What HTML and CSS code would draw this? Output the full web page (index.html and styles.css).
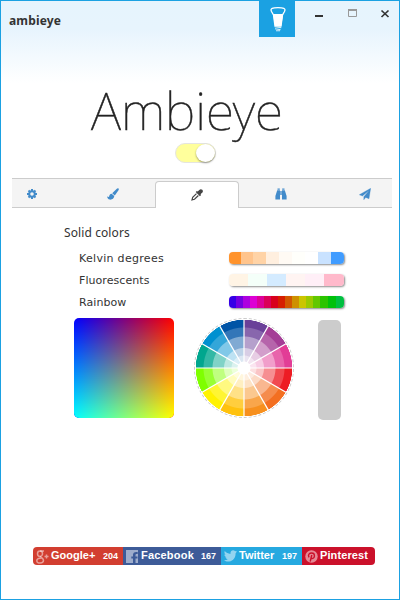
FILE: index.html
```html
<!DOCTYPE html>
<html lang="en">
<head>
<meta charset="utf-8">
<title>ambieye</title>
<link rel="stylesheet" href="styles.css">
</head>
<body>
<div class="window">
  <header class="titlebar">
    <span class="title">ambieye</span>
    <span class="bulb"><svg width="16" height="26" viewBox="0 0 16 26"><path d="M1.500 5.500C-.2 2 3 1.700 8 1.700s8.200.3 6.500 3.800L12.500 9 11 20H5L3.500 9z" fill="none" stroke="#fff" stroke-width="1.300"/><path d="M3 8h10.200l-2 12H5z" fill="#fff"/><path d="M4.800 20.800l6.500.8M5 22.800l5.500.8M6 24.700h4" stroke="#d2ecf9" stroke-width="1.100"/></svg></span>
    <svg class="controls" width="76" height="14" viewBox="0 0 76 14"><path d="M0 9h8" stroke="#333" stroke-width="2"/><path d="M33.500 3v6.500h8V3" fill="none" stroke="#999"/><path d="M33 3h9" stroke="#999" stroke-width="2"/><path d="M66.500 3.500l7 6.500M73.500 3.500l-7 6.500" stroke="#333" stroke-width="1.700"/></svg>
  </header>
  <div class="logo">
    <svg width="220" height="66"><text x="10" y="51" textLength="192" lengthAdjust="spacingAndGlyphs">Ambieye</text></svg>
  </div>
  <div class="switch"><span class="knob"></span></div>
  <nav class="tabs">
    <span class="tab t1"><svg width="10" height="10" viewBox="0 0 10 10"><circle cx="5" cy="5" r="2.800" fill="none" stroke="currentColor" stroke-width="2"/><path d="M5 0v2M5 8v2M0 5h2M8 5h2M1.500 1.500l1.300 1.300M7.200 7.200l1.300 1.300M1.500 8.500l1.300-1.300M7.200 2.800l1.300-1.300" stroke="currentColor" stroke-width="2"/></svg></span>
    <span class="tab t2"><svg width="12" height="12" viewBox="0 0 12 12"><path d="M11.300.3c.8.5.5 1.300.2 1.900L7.800 7.500 5.200 5.300 9.800.7c.5-.5 1.100-.7 1.500-.4zM4.600 5.800l2.700 2.300C7 10.800 4.800 12 2.600 11.600 1.200 11.300.3 10 .1 8.500l1.900.6C2.300 7.300 3 6 4.600 5.800z" fill="currentColor"/></svg></span>
    <span class="tab active"><svg width="12" height="12" viewBox="0 0 12 12"><path d="M11.300.8c1 1 .6 2.300-.2 3L9.500 5.300l.6.8-1.200 1.200-4.200-4.200 1.200-1.200.8.6L8.300.9c.8-.8 2-1 3-.1z" fill="currentColor"/><path d="M5.500 4.600L1.700 8.400 1 10.900l2.500-.6 3.900-3.800" fill="none" stroke="currentColor" stroke-width="1.200"/></svg></span>
    <span class="tab t4"><svg width="12" height="12" viewBox="0 0 12 12"><path d="M2.500.5h2.300v1.200H2.500zM7.200.5h2.300v1.200H7.200zM2.200 2.300H5v9.200H.4V8zM7 2.300h2.800L11.600 8v3.500H7zM5.300 3h1.400v4H5.300z" fill="currentColor"/></svg></span>
    <span class="tab t5"><svg width="12" height="12" viewBox="0 0 12 12"><path d="M11.700.2L10 10.800 6.700 9.400 4.800 11.800V8.700L10 2.400 3.500 8 .3 6.800z" fill="currentColor" stroke="currentColor" stroke-width=".3"/></svg></span>
  </nav>
  <main class="content">
    <h2>Solid colors</h2>
    <div class="row wide"><span>Kelvin degrees</span><i class="bar kelvin"></i></div>
    <div class="row"><span>Fluorescents</span><i class="bar fluo"></i></div>
    <div class="row"><span>Rainbow</span><i class="bar rainbow"></i></div>
    <div class="pickers">
      <div class="square"></div>
      <div class="wheel"><svg width="98" height="98" viewBox="-49 -49 98 98"><path d="M0-49V49M-49 0H49M-24.500-42.400l49 84.800M24.500-42.400l-49 84.800M-42.400-24.500l84.800 49M-42.400 24.500l84.800-49" stroke="#fff" stroke-width="1.200"/></svg></div>
      <div class="preview"></div>
    </div>
  </main>
  <footer class="share">
    <a class="google"><svg width="13" height="14" viewBox="0 0 13 14"><g fill="none" stroke="currentColor" stroke-width="1.500"><ellipse cx="4" cy="3.700" rx="2.500" ry="2.700"/><path d="M4 1h4M5 6.300c-1 1 2.500 2 2.500 4C7.500 13.800.8 14 .8 10.800.8 8.500 3.500 8 5.500 8M8.500 6.500h4M10.500 4.500v4"/></g></svg><b>Google+</b><em>204</em></a>
    <a class="facebook"><svg width="13" height="13" viewBox="0 0 13 13"><path d="M0 0h12v13H9.500V8.500h2V6.400h-2V5c0-1 .7-1.200 2.200-1V2C8.500 1.500 7 2.700 7 4.800v1.600H5.300v2.100H7V13H0z" fill="currentColor"/></svg><b>Facebook</b><em>167</em></a>
    <a class="twitter"><svg width="13" height="12" viewBox="0 0 13 12"><path d="M13 1.600l-1.400 1.600C11.700 9 7.500 11.500 4 11.500c-1.500 0-3-.4-4-1.200 1.500.1 2.800-.3 3.800-1.100-1.200-.1-2-.8-2.400-1.900h1.100C1.200 6.800.4 5.800.4 4.500l1.200.3C.4 3.800.1 2.400.8 1c1.500 1.800 3.400 2.700 5.700 2.900C6 1 8.800-.7 11 1z" fill="currentColor"/></svg><b>Twitter</b><em>197</em></a>
    <a class="pinterest"><svg width="13" height="13" viewBox="0 0 13 13"><circle cx="6.500" cy="6.500" r="6.200" fill="currentColor"/><path d="M4 7.300C2.500 4.500 4.500 3 6.700 3c3.800 0 3.300 5.500.6 5.500C6.500 8.500 6 8 6 7.500M6.800 5L5.200 11.500" fill="none" stroke="#cb112b" stroke-width="1.400"/></svg><b>Pinterest</b></a>
  </footer>
</div>
</body>
</html>
```
FILE: styles.css
```css
* { box-sizing: border-box; }
body { margin: 0; font-family: "DejaVu Sans", sans-serif; color: #333; }
.window {
  width: 400px; height: 600px; border: 1px solid #1ba1e2;
  background: linear-gradient(#e6f4fd 0, #e7f4fd 28px, #fff 82px);
  display: flex; flex-direction: column;
}
.titlebar { display: flex; height: 36px; flex: none; align-items: flex-start; }
.title { width: 250px; margin-left: 8px; font: bold 12px/17px "Noto Sans", sans-serif; letter-spacing: .15px; padding-top: 11px; }
.bulb { width: 36px; height: 36px; background: #1ba1e2; display: flex; justify-content: center; padding: 5px 0 0 1px; }
.controls { margin: 6px 0 0 20px; }
.logo { height: 66px; margin: 42px 0 0 80px; }
.logo svg { display: block; overflow: visible; }
.logo text { font: 100 52px "Noto Sans", sans-serif; fill: #222; stroke: #222; stroke-width: .5px; }
.switch {
  flex: none; width: 41px; height: 20px; margin: -2px 0 0 174px; border-radius: 10px;
  border: 1px solid #e5e5e0; background: #ffff9c; display: flex; justify-content: flex-end;
}
.knob { width: 19px; height: 18px; border-radius: 50%; background: #fff; box-shadow: 0 1px 2px rgba(0,0,0,.4); }
.tabs {
  flex: none; height: 30px; margin: 15px 7px 0 11px; display: grid;
  grid-template-columns: 59px 84px 84px 84px 69px;
  border-top: 1px solid #ccc; background: #f4f4f4; color: #428bca;
}
.tab { border-bottom: 1px solid #ccc; display: flex; align-items: center; justify-content: center; padding-top: 2px; }
.t1 { width: 144px; padding-right: 105px; }
.t1, .t2 { width: auto; }
.t1 { padding-right: 20px; }
.tab.active {
  margin: 2px 0 0; border: 1px solid #ccc; border-bottom: 0; border-radius: 4px 4px 0 0;
  background: #fff; color: #444; padding-top: 0;
}
.t5 { padding-left: 15px; }
.content { margin-left: 63px; padding-top: 16px; height: 339px; flex: none; }
h2 { margin: 0 0 6px; font: 12px/17px "Noto Sans", sans-serif; letter-spacing: .1px; }
.row { display: flex; align-items: center; height: 22px; padding-left: 15px; font-size: 11px; letter-spacing: .07px; }
.row.wide { letter-spacing: .3px; }
.row span { width: 150px; }
.bar { width: 115px; height: 12px; border-radius: 4px; box-shadow: 1px 1px 2px rgba(0,0,0,.45); }
.kelvin { background: linear-gradient(90deg, #ff932c 12px, #ffc48c 0 24px, #ffd3a6 0 37px, #ffefdf 0 50px, #fffaf4 0 63px, #fffffb 0 76px, #fff 0 89px, #c9e2ff 0 102px, #409cff 0); }
.fluo { background: linear-gradient(90deg, #fff4e5 19px, #f4fff9 0 38px, #d4ebff 0 57px, #fff4f2 0 76px, #ffeff7 0 95px, #ffb9cb 0); }
.rainbow { background: linear-gradient(90deg, #3500e6 7px, #7300e0 0 14px, #ad00df 0 21px, #dd00d4 0 28px, #dc0098 0 35px, #da0058 0 42px, #d8001c 0 49px, #d61e00 0 56px, #d15700 0 63px, #ce9000 0 70px, #cbc500 0 77px, #9bc900 0 84px, #62c700 0 91px, #2bc400 0 99px, #00c10b 0 107px, #00bf40 0); }
.pickers { display: flex; margin: 5px 0 0 10px; align-items: flex-start; }
.square {
  width: 100px; height: 100px; border-radius: 5px; overflow: hidden;
  background: linear-gradient(90deg, #00f, #f00);
}
.square::after {
  content: ""; display: block; height: 100%;
  background: linear-gradient(90deg, #0ff, #ff0);
  -webkit-mask-image: linear-gradient(transparent, #000); mask-image: linear-gradient(transparent, #000);
}
.wheel {
  width: 100px; height: 100px; margin-left: 20px; border: 1px dashed #ccc; border-radius: 50%;
  background:
    radial-gradient(circle, #fff 6px, rgba(255,255,255,.86) 7px 12px, rgba(255,255,255,.74) 13px 19.500px, rgba(255,255,255,.5) 20.500px 31px, rgba(255,255,255,.2) 32px 40px, transparent 41px 48px, #fff 48.500px),
    conic-gradient(#6a4099 30deg, #a43d96 0 60deg, #e23d96 0 90deg, #ed1c24 0 120deg, #f36f21 0 150deg, #f7901e 0 180deg, #ffc20e 0 210deg, #fff200 0 240deg, #7fff00 0 270deg, #00a68e 0 300deg, #0090d0 0 330deg, #0054a6 0);
}
.wheel svg { display: block; }
.preview { width: 23px; height: 100px; margin: 2px 0 0 24px; background: #ccc; border-radius: 5px; }
.share { display: flex; margin-left: 32px; width: 342px; height: 18px; border-radius: 4px; overflow: hidden; color: #fff; font: 11px/17px "Liberation Sans", sans-serif; }
.share a { display: flex; height: 18px; padding-left: 3px; }
.share svg { margin: 3px 2px 0 0; color: rgba(255,255,255,.5); flex: none; }
.share b { flex: 1; }
.share em { font: bold 9px/18px "Liberation Sans", sans-serif; margin-right: 5px; }
.google { width: 90px; background: #d23e30; }
.facebook { width: 98px; background: #3d5b98; }
.twitter { width: 81px; background: #26a9e0; }
.pinterest { width: 73px; background: #cb112b; }
.facebook b { letter-spacing: .2px; }
.pinterest b { letter-spacing: .1px; }
```
